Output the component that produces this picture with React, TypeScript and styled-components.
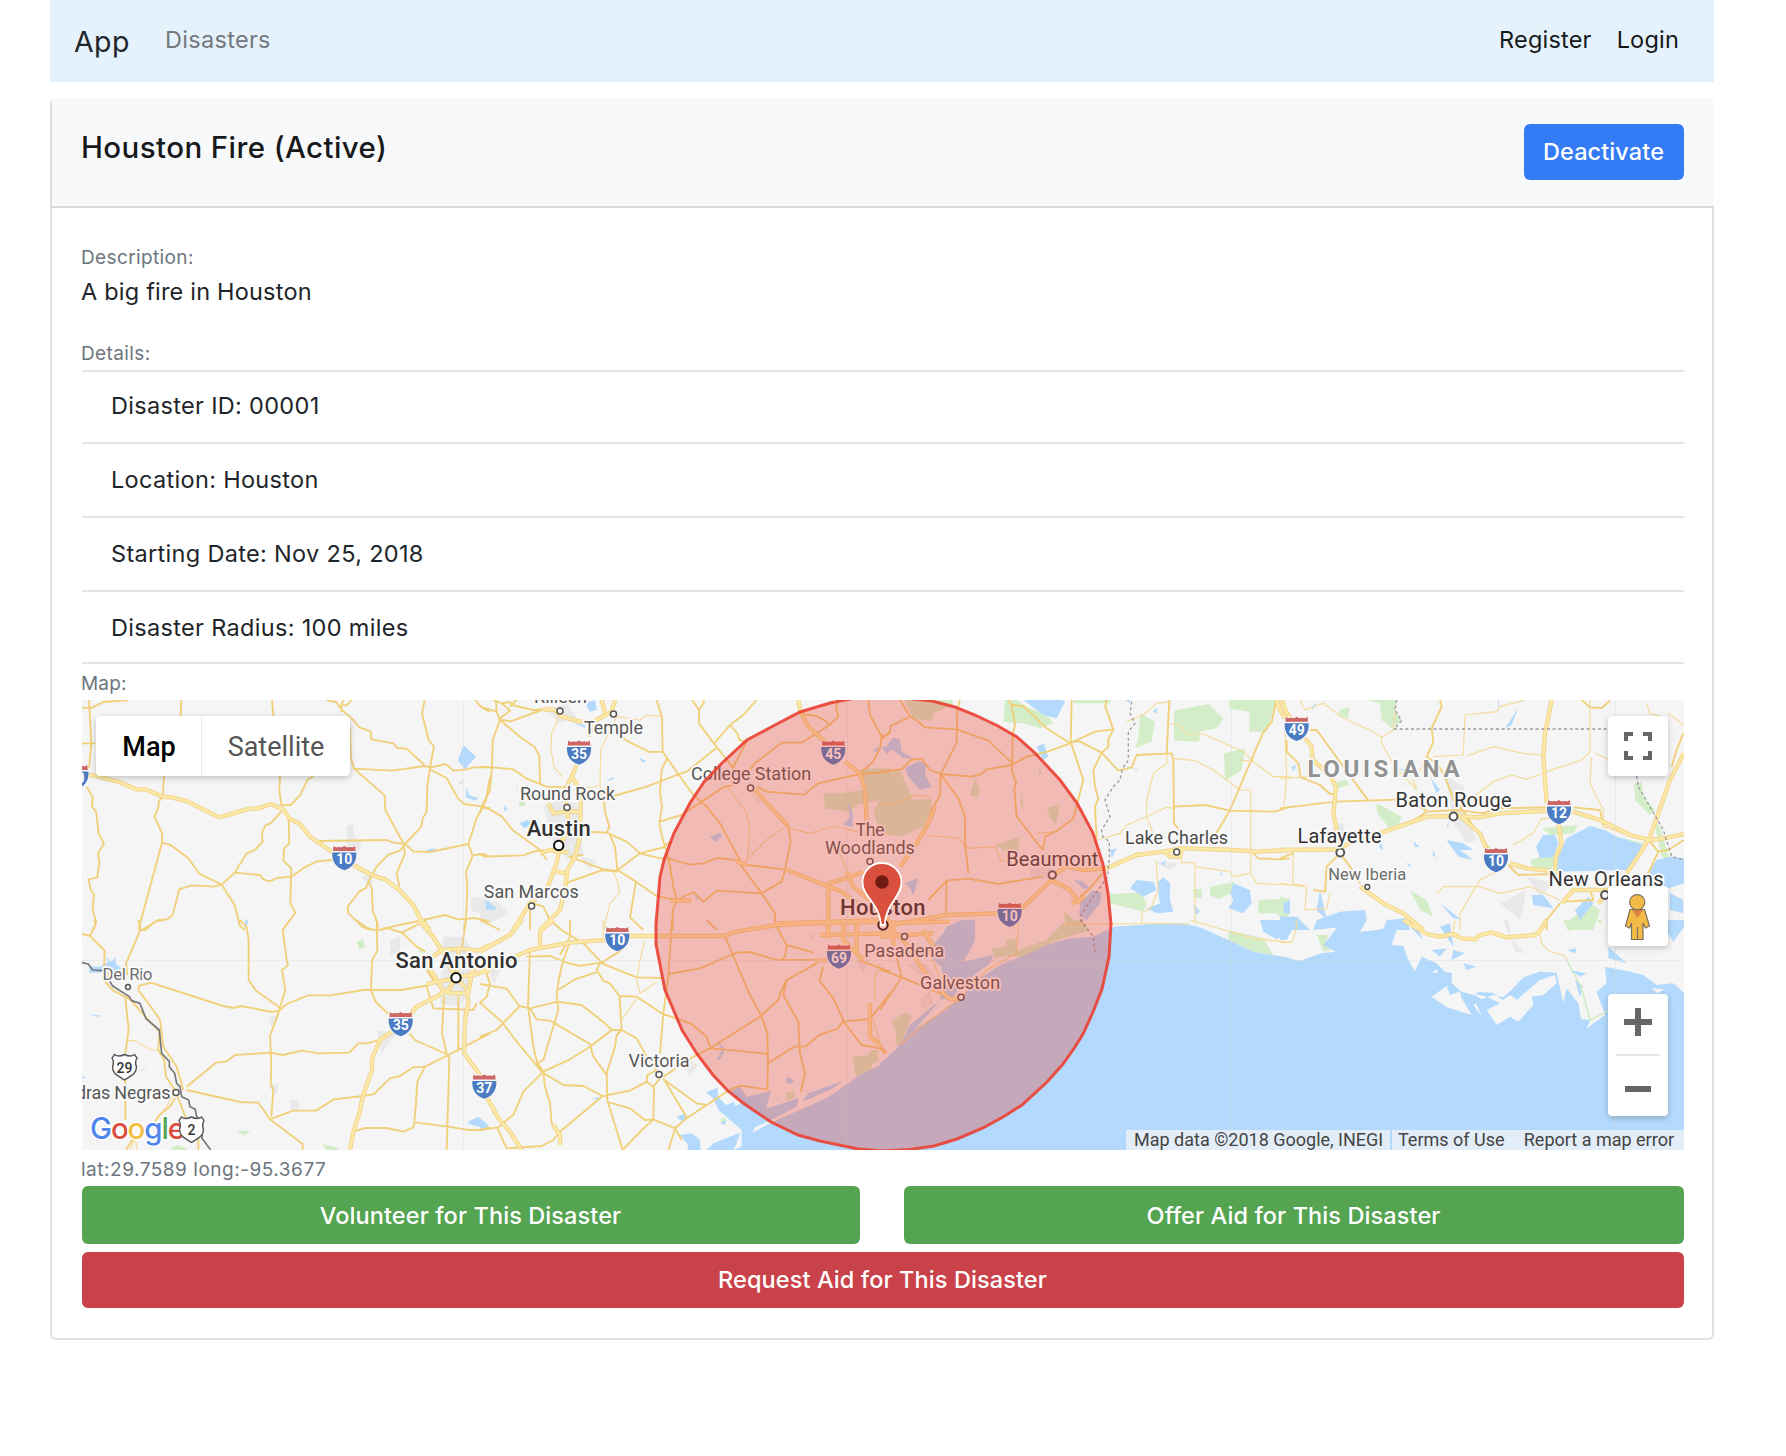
import React from "react";
import styled, { createGlobalStyle } from "styled-components";

const GlobalStyle = createGlobalStyle`
  * { box-sizing: border-box; }
  body {
    margin: 0;
    background: #fff;
    color: #212529;
    font-family: Inter, "Liberation Sans", sans-serif;
    font-size: 23.5px;
  }
`;

const Page = styled.div`
  padding: 0 72px 0 50px;
  min-height: 1456px;
`;

const Navbar = styled.nav`
  display: flex;
  align-items: center;
  height: 82px;
  padding: 0 35px 0 24px;
  background: #e5f2fc;
`;

const Brand = styled.a`
  padding-top: 1px;
  font-size: 28.5px;
  letter-spacing: 0.4px;
  width: 91px;
`;

const NavLink = styled.a<{ $muted?: boolean }>`
  padding-bottom: 3px;
  color: ${(p) => (p.$muted ? "#74797f" : "#15181b")};
  letter-spacing: ${(p) => (p.$muted ? "0.3px" : "0.2px")};
`;

const NavRight = styled.div`
  display: flex;
  gap: 25px;
  margin-left: auto;
`;

const Card = styled.section`
  margin-top: 16px;
  border: 2px solid #dddfe0;
  border-top: 0;
  border-radius: 6px;
`;

const CardHeader = styled.header`
  display: flex;
  justify-content: space-between;
  align-items: flex-start;
  height: 110px;
  margin-right: -2px;
  padding: 26px 30px 26px 29px;
  background: #f8f9fb;
  border-bottom: 2px solid #d9dbdd;
  border-radius: 4px 5px 0 0;
`;

const Title = styled.h1`
  margin: 0;
  font-size: 29.5px;
  font-weight: 500;
  line-height: 47px;
  letter-spacing: 0.4px;
  color: #17191b;
`;

const tones = { primary: "#337cf6", success: "#54a451", danger: "#ca4249" };

const Button = styled.button<{ $tone: keyof typeof tones; $wide?: boolean; $height?: number }>`
  display: flex;
  align-items: center;
  justify-content: center;
  height: ${(p) => p.$height ?? 56}px;
  width: ${(p) => (p.$wide ? "100%" : "160px")};
  padding: 0 1px 2px 0;
  border: 0;
  border-radius: 6px;
  background: ${(p) => tones[p.$tone]};
  color: #fff;
  font: inherit;
  font-weight: 500;
  letter-spacing: 0.1px;
`;

const CardBody = styled.div`
  padding: 35px 28px 30px 30px;
`;

const Label = styled.div<{ $spaced?: boolean }>`
  height: 28px;
  font-size: 19px;
  line-height: 30px;
  margin-top: ${(p) => (p.$spaced ? 29 : 0)}px;
  margin-bottom: 3px;
  text-indent: -1px;
  color: #6c757d;
  letter-spacing: 0.38px;
`;

const MapCaption = styled.div<{ $digits?: boolean }>`
  height: 36px;
  line-height: 40px;
  font-size: 19px;
  text-indent: -1px;
  color: #6c757d;
  letter-spacing: ${(p) => (p.$digits ? 0.52 : 0.2)}px;
`;

const Value = styled.div`
  line-height: 36px;
  text-indent: -1px;
  letter-spacing: 0.2px;
`;

const List = styled.ul`
  list-style: none;
  margin: 0;
  padding: 0;
  border-top: 2px solid #e3e4e4;
`;

const Item = styled.li`
  display: flex;
  align-items: center;
  height: 74px;
  padding: 0 0 2px 29px;
  letter-spacing: 0.32px;
  border-bottom: 2px solid #e3e4e4;
  &:first-child, &:last-child { height: 72px; }
  &:first-child { padding-bottom: 4px; }
  &:last-child { padding-bottom: 0; }
`;

const Actions = styled.div`
  display: grid;
  grid-template-columns: 778px 1fr;
  gap: 8px 44px;
  & > :last-child { grid-column: 1 / -1; }
  & > :not(:last-child) { padding: 1px 1px 0 0; }
`;

const MapFrame = styled.div`
  position: relative;
  height: 450px;
  overflow: hidden;
  background: #f5f5f5;
  font-family: Roboto, "Liberation Sans", sans-serif;
  & > svg { display: block; }
`;

const MapControl = styled.div<{ $top: number; $height?: number }>`
  position: absolute;
  right: 16px;
  top: ${(p) => p.$top}px;
  width: 60px;
  height: ${(p) => p.$height ?? 60}px;
  background: #fff;
  border-radius: 4px;
  box-shadow: 0 2px 6px rgba(0, 0, 0, 0.22);
`;

const MapTypes = styled.div`
  position: absolute;
  left: 14px;
  top: 16px;
  display: flex;
  height: 60px;
  background: #fff;
  border-radius: 4px;
  box-shadow: 0 2px 6px rgba(0, 0, 0, 0.22);
`;

const MapType = styled.div<{ $active?: boolean }>`
  display: flex;
  align-items: center;
  justify-content: center;
  width: ${(p) => (p.$active ? 105 : 149)}px;
  padding: ${(p) => (p.$active ? "2px 0 0 1px" : "2px 0 0 0")};
  font-size: 27px;
  font-weight: ${(p) => (p.$active ? 500 : 400)};
  color: ${(p) => (p.$active ? "#000" : "#565656")};
  border-left: ${(p) => (p.$active ? "0" : "1px solid #e8e8e8")};
`;

const Attribution = styled.div`
  position: absolute;
  right: 0;
  bottom: 0;
  display: flex;
  gap: 2px;
  height: 20px;
  font-size: 18px;
  line-height: 20px;
  color: #444;
`;

const Credit = styled.div<{ $width: number; $inset?: number }>`
  display: flex;
  justify-content: space-between;
  width: ${(p) => p.$width}px;
  padding: 0 10px 0 ${(p) => p.$inset ?? 8}px;
  background: #e2edf7;
  white-space: nowrap;
`;

type Tile = {
  x: number;
  y: number;
  water?: string;
  land?: string;
  green?: string;
  urban?: string;
  thin?: string;
  road?: string;
  motorway?: string;
  border?: string;
  state?: string;
};

const tiles: Tile[] = [
  {
    x: 80, y: 690,
    water: "M1150 165L1188 200 1155 238 1134 212ZM1158 290L1168 316 1195 325 1185 332 1158 322ZM500 685L503 700 498 720 494 705ZM1032 484L1052 476 1072 476 1054 486ZM1218 635H1230V660H1218Z",
    urban: "M802 405H820L824 440 846 465 836 485 800 475ZM845 560L865 554 880 574 870 588ZM1170 622H1230V692L1200 672 1175 662ZM1132 280L1157 262 1147 284Z",
    road: "M6 52L30 56 70 36 145 30M27 30L34 160 28 225 20 250M6 160H46M304 30L302 78M576 30L580 78M740 30L768 36 784 58 820 90 838 112 872 124 874 148 940 160 952 174 980 176 1034 226M784 66V44L790 30M786 46H800L815 30M810 110L812 200 822 236 938 242 1034 228 1052 232 1098 222 1120 242 1160 238 1180 232H1230M1034 30L1026 70 1046 150 1062 170 1050 232 1042 290 1040 365 1028 385 1024 410 975 462M822 236L914 316 916 360 970 460 975 490 950 550 958 590M1050 238L1100 264 1134 325 1152 342 1210 350 1230 355M1185 30L1205 52 1230 66M1230 262L1218 330 1190 385 1165 462 1178 498 1158 545 1162 590 1158 690 1150 720M1178 496L1206 492 1230 500M20 290L38 322 36 350 48 364 56 430 72 460 54 490 58 515 52 562 26 568 32 600 42 612 38 660 48 695 40 720M252 258L248 320 236 335V350L224 380 246 430V458L175 720M246 458L272 465 325 505 357 550 425 584 464 645 480 708 495 720M190 718L235 690 262 688 278 675 298 598 335 586 400 590 425 584 464 548 500 490 525 480 548 455 546 430 556 406 572 400 604 364M464 548L540 555 550 568 568 574 592 564 634 560 674 532 712 514 757 510M600 258L598 300 604 345H632L660 316 682 270 700 258M626 390L628 460 612 475 610 512 634 535 631 640 646 668 608 720M715 453L920 450 940 458 975 462 1000 484 1050 486 1165 462M975 464L960 482 925 494 890 530 862 582 858 594 838 605 804 648V668L846 710 870 720M866 580L876 595 878 660 894 705 890 720M905 720L925 712 1030 690 1095 675 1135 688 1185 684 1230 695",
    motorway: "M20 255L40 256 118 276 168 298H196L248 320 275 322 322 334 418 382 500 358 540 354 572 342 610 358 628 385 660 402 690 440 757 486M820 525L875 555 915 568 958 600 1000 645 1020 685 1050 720",
  },
  {
    x: 80, y: 920,
    water: "M28 140H60L85 125 75 110 95 125 105 112 110 135 125 145 100 155 75 150 60 158H28ZM28 282L68 288 48 290ZM178 455L206 445 186 449ZM1165 605L1195 590 1225 615 1215 625 1165 612ZM495 0H503L499 22ZM6 470H20L6 477Z",
    green: "M830 66L848 58 856 80 838 88ZM470 632H512L492 647ZM270 690L290 675 320 685V690ZM728 672L773 684V690H738ZM1010 95L1025 87 1030 99Z",
    urban: "M1090 50H1150L1170 80V200L1140 260 1080 250ZM565 290L595 285 575 325ZM565 500L595 490 590 525ZM632 540H657V575H632ZM890 330L950 340 905 400ZM930 60L960 50V100L930 105Z",
    thin: "M145 362H165L215 390H235M150 690L165 655 172 690M225 605L260 560 285 510H260",
    road: "M6 42L30 48 74 92 72 150 86 165M30 48L48 10 42 0M175 0L182 28 138 130 142 165M182 30H196L225 5 250 0M480 0L500 22 506 60V180L528 212 598 262M630 0L608 30 620 120 624 136 606 150 616 210 600 262 598 272 570 348 574 430 572 490 580 510 574 590M176 212V198L212 188 430 258 460 264 484 258 575 276 598 272 620 252 684 226H752L850 210H965L1050 195M828 0L862 24 890 32 920 24 966 38 1010 80 1036 95M890 0L892 92 876 122 873 210 886 244 925 282M966 38L1040 0M1158 0L1145 90M72 150L76 186 100 212 150 238 196 290 238 335 235 390 252 418 258 470 285 510 320 600 355 640V690M176 212L205 250 240 300 250 380 290 440 310 510M136 235L146 328 136 400M136 480V600M138 690L160 655M320 510L480 546 535 548 570 598 668 672V690M320 500L408 428 440 424 465 405 572 398 608 405 665 392 716 400 808 398 835 370H860L905 358M570 598L640 572H708L762 538 850 528 882 522 930 475 960 468 1000 442 1035 440 1105 405 1230 340M988 340L1005 360 1105 405 1108 420 1100 690M1035 440L1012 485 1008 550 1003 605M820 635L855 624H920L970 635 1000 622 1003 607 1105 620 1165 630H1200L1230 622M285 535L270 560 238 585 225 605M1040 200L1060 265 1180 270 1190 250M1040 150L1060 180 1100 220M1092 230L1086 340 1100 400M1135 230V395",
    motorway: "M1060 110L1085 90 1140 86 1195 92 1230 75M1040 130L1072 182 1090 215 1125 220H1165L1175 160 1195 130M1015 0L1055 45 1085 90 1125 170M1125 175L1110 205 1070 230 1010 260 990 285M935 335L900 360 876 415V450L848 530 838 580 820 635 810 690M1128 170L1160 210 1165 250 1155 300 1152 400 1200 465M1128 170L1180 165 1230 150M1040 192L1125 175M1135 90L1130 170",
    border: "M6 128L25 132 38 150 68 152 74 160 98 198 148 230 155 242 180 250 198 296 238 330 245 400 268 424V440L284 460 290 490 300 500 305 530 326 540 330 560 346 568 350 590 368 605 366 655 392 690",
  },
  {
    x: 480, y: 690,
    water: "M315 40L345 30 350 60 330 65ZM280 100L315 105 318 115ZM475 200L500 215 488 217ZM375 275L400 260V268ZM75 345L83 360 71 362ZM118 400L143 390 158 400 133 415ZM15 630L50 655 40 660 18 655ZM690 440L720 428 728 438 706 456ZM1100 325L1118 370V410L1090 405 1110 380ZM1180 185L1192 167 1194 182ZM1205 170H1230V185L1220 193ZM642 615L654 620 651 630Z",
    green: "M1030 310H1080L1150 300 1140 240 1160 235H1230V430L1190 400 1180 360 1200 330 1130 345 1110 365 1035 355ZM110 285L115 305 112 310ZM115 335L135 330V345L120 350Z",
    urban: "M200 60L260 40 290 80 240 100ZM190 350L230 330 290 340 310 490 260 510 220 450ZM0 630L60 640 85 670 30 700H0ZM820 320L850 325 835 345ZM300 500L350 510 330 540Z",
    thin: "M232 80L230 100 215 130 213 180 222 230 245 260M370 335L360 290 362 180 385 130 410 80 480 90 500 75 545 80M280 300L355 288M400 545L415 580 418 610 390 640 380 680 372 720M745 295L795 360 808 400 805 490 795 520M800 510L870 440 910 415M930 415L990 430 1060 408 1130 425 1200 435 1230 430M1050 460L1085 500 1100 545",
    road: "M0 50L50 65 60 90 38 150 36 232 30 300 8 345 0 370M40 30L68 42 90 62 56 88M66 40L90 36 100 46 160 60 190 58M110 30L90 50M50 65L48 30M56 88L92 94 185 60M60 90L125 145 163 170 178 198 180 280M0 230L36 232 100 238 138 265 200 290 260 292M0 350L30 358 66 380 98 420 180 480 200 510M0 495L10 492 12 500 130 496 160 485 190 480M310 495L268 500 370 538 410 542 480 490 550 472 570 455M380 428L440 455 480 490 540 505 566 506M530 30L546 80 548 185 508 186 440 152 410 130M548 185L562 205 545 238 540 310 546 350 538 400 546 440 566 505 580 590 590 630 578 660V720M562 205L600 260 640 315 680 350 720 400 782 515M636 30L657 60V100L700 158 760 235 765 220 800 155M657 60L670 40 672 30M702 160L750 105 790 75 830 30M750 105L772 130 778 150 800 155M708 175L620 245 590 255 500 290 400 318 300 335M372 335L375 365 388 410 380 428 330 426M388 430L405 470 412 540 468 575 530 618 580 628M540 395L605 375 730 292 760 285 800 250 825 220 905 158 965 158 1010 130 1048 105 1040 95 1010 78 965 72M468 575L450 682 490 720M412 545L368 540 262 578 240 610M1048 105L1075 80 1068 50 1075 30M1165 30L1170 75 1205 140 1200 175 1180 215 1140 250M1205 140L1230 130M830 290L860 305 972 314 1015 280 1140 252 1230 245M566 506L630 524 670 520 712 504 780 512M800 525L915 538M590 630L640 606 670 635 710 602 840 610M782 525L845 610 885 670V700M925 410L932 455 915 540 905 575 840 612M0 690L60 720M150 650V720M210 690L190 650 160 640",
    motorway: "M405 30L395 65 340 95 325 140M365 30L375 70M290 225L275 260 260 290 258 340M275 260L300 300 302 350 300 440 285 500 262 540 255 600 240 660 180 720M205 340L220 370 258 365H300M258 340L262 365 268 420 240 460 230 520 200 600 150 640 100 720M190 58L225 60 245 80 300 95H340M180 490L210 480 265 488M215 540L255 550M955 30L960 60 985 110 1035 155M1095 215L1140 250 1155 300 1160 400M825 300L925 410M915 538L1010 575 1085 605 1130 640M1045 720V580L1100 565 1150 545M1100 545L1120 590 1180 640 1210 700M770 515L800 525M570 632H635M885 700L1230 690",
  },
  {
    x: 480, y: 920,
    water: "M678 517L712 503 714 530 738 555 762 545 765 558 785 550 748 515 780 500 800 530 873 513 858 566 955 535 950 560 873 600 825 622 817 638 880 605 1000 552 1050 528 1140 465 1200 435 1230 415V690H680L700 670 780 638V680L785 630 715 570 700 535ZM622 690L625 675 600 645 635 640 660 660 662 690ZM968 545L985 520 1088 483 1060 505ZM920 470L942 480 932 492 916 487ZM710 360L735 388 720 420H710L725 390ZM590 590L610 582 620 592 605 604ZM720 610L740 600 735 615ZM325 540L360 530 355 536ZM0 600L25 622 0 627Z",
    land: "M780 640L786 635 784 680 760 690 770 670Z",
    green: "M1118 410L1165 405 1175 390H1195V420L1175 435V455L1128 470ZM918 515H946L941 535 919 540ZM718 600L733 592 741 602 726 610ZM755 690L783 678 773 690Z",
    urban: "M610 430L630 420 655 435 630 470ZM30 160L50 120 70 135 40 195ZM985 50L1005 35V65ZM1130 120H1170L1150 160Z",
    thin: "M370 0V50M495 60L480 120 470 180 480 220 530 185M470 235L425 300M1200 130L1185 170V240M1180 300L1200 370",
    road: "M0 192L80 206 118 258 150 265 232 245 305 255 375 310 395 330 425 330 470 355 500 410 530 450M0 350L50 330 120 258M20 160L30 190 20 230 0 248 65 305 118 375 188 458 250 495 310 498 368 528M150 90L144 258 160 380 172 430M150 265L170 298 210 302 330 372 340 410 380 465M240 105L270 50V0M235 210L285 178 355 155M230 220L238 170 250 120 268 70M210 0L245 30 310 70 365 128 418 95 440 70M140 110L210 108 260 128 300 138 360 128 470 172 545 174M360 128L350 150 370 182 390 190 418 228 425 330 410 345 405 380 380 460 382 540 428 690 486 630M418 228L470 230 545 280 635 312 680 350 690 380M230 220L235 270 190 420 172 430 190 455M395 330L330 380 270 418 190 455 130 515 100 585 80 600 52 625M190 458L195 500 210 550 215 610 235 640M368 528L240 635 220 660 185 678 80 685 50 620M0 630L52 622M368 528L450 512 500 485 520 500 540 475M500 485L502 465 530 450M540 400L550 280 565 170 576 0M380 545L450 565 495 600 520 598 585 625 620 595 680 555 745 512 780 497 862 508 864 430M486 630L520 598M522 500L520 598M550 475L620 592M550 478L650 550 680 555M585 628L565 690M585 625L605 660M550 470L640 410 690 385 840 290 895 240 905 210 920 180 1010 130M690 385L770 392 862 402M565 162L660 145 770 98 810 96 890 120H1010M735 50L810 225 845 290 862 340 864 430 942 380H975L1018 345 1075 325 1090 300 1060 235 1018 182 1030 140M920 180L910 225 955 305 960 400 975 460 962 515M890 20L920 75 915 110 905 120M920 75L1000 98M680 0L710 30M1090 305L1170 297 1230 220M1090 305L1145 375 1200 385 1215 400M1135 120L1230 155",
    motorway: "M220 0L180 35V80M125 0L90 45 0 95M0 155L60 130 150 90 270 68 375 60M448 48H730L770 35 890 15 1000 10 1230 5M20 530L55 595 90 635 125 690M220 615L240 645V675M1020 45L1230 40M1045 0V55M1130 0V100M1170 250V350L1200 375M1090 0V60L1150 120M1005 122H1040",
  },
  {
    x: 880, y: 690,
    water: "M430 30L490 75 530 85 555 35 545 30ZM12 180L40 142 60 150 65 185 100 205 70 205 40 180ZM75 235L120 212 138 225 135 255 155 290 120 300 85 260ZM470 170L492 160 504 200 489 210ZM600 640L640 600 665 610 660 640 620 690 598 675ZM580 568L610 576 630 596H610ZM75 580L115 565 100 615 90 595ZM750 595L770 570 820 575 830 600 790 620ZM830 580L850 562 870 580V630L880 665 830 670 800 655 840 640ZM700 710L870 700 910 720H700ZM845 520L857 510 852 530ZM1020 540L1028 555 1023 560ZM1060 580L1110 600 1115 640 1090 670 1045 655 1060 630 1050 610ZM940 640L960 665 945 675ZM1210 640L1230 630V670H1212ZM818 65L833 50 828 70ZM690 480L710 475 695 505ZM735 30H750V40Z",
    green: "M375 30H410L440 50 500 75 520 100 480 115 430 100 370 95ZM580 30H690V40H580ZM882 62L985 42 1030 85 1010 115 960 125 958 155 882 152ZM1048 30H1190L1160 125H1108V65L1048 55ZM780 70L825 95 815 155 765 175 775 145ZM1032 190L1095 175 1085 240 1035 272ZM690 612L780 608 800 640 790 665 690 640ZM990 590L1065 575 1060 605 1015 628 990 615ZM1135 630L1230 625V665L1215 700 1190 670H1135ZM75 30H218V45L160 70 155 95 100 85ZM0 250L60 240 100 330 155 325V360L130 410 60 440 0 430ZM285 262L300 307 290 322 270 317ZM425 300L431 360 421 340ZM500 355L540 343 528 403 513 388ZM345 465L420 440 410 500 380 485ZM478 230L488 255 476 250ZM550 660L590 700 560 720ZM937 598H965V623H945Z",
    urban: "M820 515L900 520 870 540ZM450 490L510 510V570L450 560ZM740 230L775 235 770 243Z",
    thin: "M860 190V220L820 250 800 330V380L815 420 830 450M882 355L860 352 800 380 740 405 720 430 650 450M868 100L900 105 920 132H970L1090 185 1120 215M880 205L945 212 1000 240 1080 300H1112V550L1130 580 1230 585M1080 210L1120 215 1180 260H1230M868 35L830 40 790 75 740 95M905 490V518H945V700M945 530L1050 545 1060 560 1110 550M828 510L835 600 815 650 785 670V700L930 702M0 340H60L100 315 150 320M135 435L235 445 265 475 345 470 365 515 470 500M400 720L420 640M470 430L530 425",
    road: "M240 30L232 60 230 158 182 252 180 315 150 370M60 30L90 78 108 90 135 112 232 118 325 152 395 218M0 150L30 125 32 108 90 80M0 245L65 238 92 210 125 206 150 240 182 252 275 260 305 252 320 238 395 225 440 200 502 185 570 160 645 125 700 118M385 30L395 45 405 105 398 135 396 245 408 275 403 300 410 380 488 480M395 45L430 48 500 115 570 160M575 30L572 155 610 270 580 385 535 420 495 440 488 480M680 30L676 50 700 118 684 150 686 170 665 188 640 240 645 290 655 325 645 350 650 445M572 155H600L665 188 715 242 755 232 770 195 875 190 880 210 882 400 898 420M868 30L860 190M182 252L235 325 255 380V460L265 550M200 572L265 566 355 582 488 560M200 572L145 630M200 572L198 668M885 350L975 345 1050 362 1185 365 1230 350M1190 30L1175 95 1148 130 1050 360 988 465M1120 490L1135 505 1200 508 1230 505M668 550L625 600 600 620",
    motorway: "M1190 30L1200 60 1215 85M165 350L145 400 110 460 60 530M0 710L60 700 200 675 350 670M425 655L515 570 570 600 600 640M520 555L560 530 610 540 680 535 770 495 850 485 905 475 1060 480 1130 485 1230 480M855 485L870 500H900L905 478M575 640L615 620",
    state: "M755 35L750 70 765 100 745 125V210L728 235 720 270 700 290 675 330 690 380 665 420 668 440 688 455V500L683 560 640 620 600 680 620 715",
  },
  {
    x: 880, y: 920,
    water: "M0 430L45 390 100 330 180 280 240 235 290 180 370 130 430 108 500 75 570 55 640 50 690 25 780 15 900 8 960 22 1045 60 1120 95 1230 114V690H0ZM245 0H285V60L265 100 250 125 340 105 330 130 290 160 240 200 220 230 180 240 130 300 90 340 60 375 90 315 180 240 190 180 185 140 160 120 155 80 190 40 200 20ZM1140 0H1220L1228 35 1190 58 1150 35Z",
    green: "M335 85L375 80 380 58H410L412 90 500 60 550 10 600 0 630 30 520 65 430 110 375 110 345 115ZM35 305L75 275 95 290 60 380 45 370 50 340ZM1045 30L1150 55 1180 105 1120 95 1045 60Z",
    urban: "M80 130H140L180 200 110 160ZM120 240L150 210 160 250 125 270Z",
    thin: "M415 0L410 100 320 150 240 235 130 315 60 375M690 12L830 10M930 0L1120 55 1230 68M150 100L180 180M70 90L160 95M550 12H690",
    road: "M0 148L65 172 190 225M65 172L0 270M45 90L65 172M0 375L20 400",
    motorway: "M0 0L70 60 110 120 150 180 205 235 240 238M0 50L160 40M0 10L210 5M40 0V80M130 30L160 80 130 110",
    state: "M600 0L640 50 645 95",
  },
  {
    x: 1280, y: 690,
    water: "M835 500L860 445 930 408 975 420 1010 440 1090 465 1085 480 1045 540 830 545ZM768 470L790 435H825L835 460 820 500 780 505ZM1100 550L1130 510 1170 500 1212 505V580L1150 600ZM500 450L550 460 580 480H540L580 510 535 500ZM380 515L395 530 385 528ZM460 480L468 505 458 495ZM400 455L420 470H405ZM480 640L545 690 520 685ZM755 615H790L820 655 760 645ZM110 690L180 665 255 660 260 690 150 715 100 720ZM0 680H50L90 720H0ZM320 690L380 685 390 720H310ZM885 660L925 620 940 640 900 690ZM35 230L50 225 40 245ZM450 260L480 300 470 310ZM654 30H657V90ZM715 55L675 115 695 105ZM110 40L95 62 100 45ZM300 450L310 480 298 475ZM500 410L508 390 505 412ZM120 600L140 690 110 660ZM1170 610L1210 630V670L1170 660ZM355 238L400 238 380 246Z",
    green: "M178 60L208 50 206 85 176 75ZM260 30H350L345 60 365 90 335 115 305 90 300 40ZM290 340L365 380 355 405 325 412 290 365ZM1062 280L1085 275 1090 320 1125 360 1110 375 1065 330ZM1120 390L1140 410 1170 510 1145 500ZM750 510L850 480 810 540 760 535ZM785 415L895 405 880 430 810 435ZM170 275L200 270 205 285 175 295ZM0 620L20 625 15 700H0ZM390 600L440 630 460 680 420 660ZM870 690L930 640 960 660 940 720H870ZM170 680L210 670 190 710ZM1010 440L1090 460 1060 470Z",
    urban: "M500 260L555 290 540 340 590 450 560 460 520 400ZM160 400L190 400 200 450 170 460ZM740 560L820 580 780 620ZM660 640L740 600 720 690Z",
    thin: "M60 30L75 60 130 40 190 85 270 120 305 142V160L345 230 410 300 400 270 440 210M460 200L550 195 555 75 650 65 660 50 730 32M305 142L340 120 345 60M560 198L640 170 730 190 785 195M550 345L640 275 695 255 740 268 785 252M930 30V185L905 210 800 245M945 190L1000 215 985 230M935 200L930 280 970 360 968 410 1095 450M15 120L20 260 12 350M40 485L38 580 80 590 75 660 140 655 150 610M0 580L70 590M470 610L490 590H600L660 610 750 590 840 630M650 545L600 570 540 670V720M100 260L0 265M700 465L760 430 785 385 860 388M1100 40L1110 70 1165 85M1210 105L1165 70",
    road: "M20 150V185L55 220 62 262 120 285 150 312H170M90 120H110L265 332M0 355L120 340 170 335 370 328 400 340 440 362M480 30L485 50 455 115 460 155 440 200 470 220 490 250 530 350M388 400L440 365 530 360 610 370 650 355 800 352M880 352L960 360 970 405M540 350L630 480M905 30L930 52 965 54 990 32M1210 130L1190 180 1175 230M180 490L140 530 135 605 100 600M180 490L210 530 240 580M685 525L715 555 830 552M1212 450L1165 480 1135 485 1110 455M1135 485L1100 560M840 640L800 690V720M930 600L940 630 850 635M0 505L40 490",
    motorway: "M5 30L20 70 45 95M75 145L95 170 98 210 150 255 168 290 160 370 178 460M0 480L180 478 205 460 300 430 440 380 520 378 600 382 660 370 800 362M815 30L795 130 790 200 800 340M530 370L600 430 620 480M690 520L740 535 830 545M835 400L845 460 828 500 825 540M878 365L960 390 1050 435 1110 450 1150 445 1212 432M1212 190L1170 270 1110 440 1080 490 1040 550M240 590L310 640 370 670 430 720M845 640L880 600H990L955 640",
    state: "M350 30L345 60 365 92 342 117H985M1070 258L1075 290 1110 350 1150 420 1175 500 1212 510",
  },
  {
    x: 1280, y: 920,
    water: "M0 110L60 122 125 100 168 95 130 75 170 25 130 15V0H260L240 35 290 30 355 15 335 75 370 78 385 120 405 153 425 110 470 130 495 155 515 160V190L545 215 580 225 650 180 735 170 780 155 830 158 850 250 860 205 895 250 903 298 935 300 920 325 975 285 950 215 980 190 975 140 1050 155 1090 165 1130 195 1180 190 1212 220V690H0ZM0 0L30 5 35 30 20 60H0ZM1120 0H1212V20L1180 65 1165 40ZM985 80L1040 130 985 115ZM480 20L520 80 510 10ZM520 90L555 100 515 120ZM860 90L890 85 885 100ZM870 150L920 160 900 170ZM455 90L500 85 480 110ZM400 0L430 60 395 25ZM885 180L910 200 900 230ZM550 130L590 140 560 150Z",
    land: "M455 230L500 198 510 225 540 215 545 235 575 285 500 262ZM535 195L600 190 660 175 700 165 730 172 700 205 670 232 640 225 605 238 585 225ZM560 215L620 230 660 250 620 270 650 315 690 290 715 305 760 255 755 230 790 225 830 190 825 165 780 180 730 222 712 240 690 225 668 240 640 218ZM580 255L588 250 606 290ZM900 200L940 210 960 280 920 328 935 288ZM1115 205L1153 208 1133 220ZM455 155L475 148 470 160ZM1050 80L1120 90 1195 165 1185 180 1130 150Z",
    green: "M175 100L235 72 300 112 285 145 250 147ZM110 45H145L135 75 165 85 130 95ZM850 0H910L865 35ZM950 0H965V15ZM365 0H385L375 15Z",
    urban: "M670 0H685L695 60 735 100 705 95Z",
    thin: "M525 0L518 42M780 45L785 70 810 95 850 105 862 118M0 68L38 65 50 20 48 0",
    motorway: "M370 0L440 42 478 50 520 42 545 55 585 58 600 45 635 38 680 52 765 45 778 35 800 0",
  },
];

type LayerKey = Exclude<keyof Tile, "x" | "y">;

function Layer({ of, ...rest }: { of: LayerKey } & React.SVGProps<SVGGElement>) {
  return (
    <g strokeLinejoin="round" {...rest}>
      {tiles.map((t, i) =>
        t[of] ? <path key={i} d={t[of]} transform={`translate(${t.x} ${t.y}) scale(.33333)`} /> : null
      )}
    </g>
  );
}

type City = {
  name: string;
  x: number;
  y: number;
  w?: number;
  size?: number;
  color?: string;
  weight?: number;
};

const cities: City[] = [
  { name: "Killeen", x: 560.5, y: 702.5, w: 53 },
  { name: "Temple", x: 613.5, y: 734, w: 59 },
  { name: "Round Rock", x: 567.5, y: 799.7, w: 95 },
  { name: "Austin", x: 558.7, y: 835.5, w: 64, size: 22, weight: 500, color: "#303030" },
  { name: "San Marcos", x: 531.3, y: 898, w: 95 },
  { name: "San Antonio", x: 456.5, y: 967.6, w: 122, size: 22, weight: 500, color: "#303030" },
  { name: "Del Rio", x: 127.5, y: 979.7, w: 50, size: 17, color: "#6c6c6c" },
  { name: "Piedras Negras", x: 111, y: 1098.7, w: 119 },
  { name: "College Station", x: 751.1, y: 780.3, w: 120 },
  { name: "The", x: 870, y: 835.5, w: 29 },
  { name: "Woodlands", x: 869.9, y: 853.5, w: 90 },
  { name: "Houston", x: 882.7, y: 915, w: 85.5, size: 22, weight: 500, color: "#303030" },
  { name: "Pasadena", x: 904.3, y: 957.3, w: 80 },
  { name: "Galveston", x: 960.1, y: 989.4, w: 80 },
  { name: "Beaumont", x: 1052.3, y: 866, w: 92, size: 20, color: "#404040" },
  { name: "Lake Charles", x: 1176.5, y: 844, w: 103, color: "#4a4a4a" },
  { name: "Lafayette", x: 1339.5, y: 843, w: 84, size: 20, color: "#333" },
  { name: "New Iberia", x: 1367.2, y: 880.4, w: 78, size: 16.5, color: "#6c6c6c" },
  { name: "Baton Rouge", x: 1453.5, y: 807, w: 116, size: 20, color: "#333" },
  { name: "New Orleans", x: 1606, y: 886.4, w: 115, size: 20, color: "#333" },
  { name: "Victoria", x: 659, y: 1067, w: 61 },
];

const dots: [number, number, number?][] = [
  [560, 711], [613.5, 714], [567, 807.5], [558.7, 845.5, 5], [531.6, 906], [456, 977.7, 5], [128, 987, 2.7],
  [176, 1092.5], [750.6, 788], [870, 861.5], [883, 925, 5], [904.5, 936.5], [961, 997.3], [1052.3, 875, 4],
  [1176.7, 852], [1340.3, 852.5, 4.2], [1367.3, 887, 2.7], [1453.5, 816.5, 4.2], [1605, 895, 4.2], [659, 1074.5],
];

const interstates: [string, number, number][] = [
  ["10", 76.5, 777], ["10", 344.3, 858], ["35", 579, 752.5], ["45", 833.3, 752.5], ["10", 617.3, 939],
  ["69", 839, 956.5], ["10", 1009.7, 914.7], ["49", 1296.7, 728.8], ["12", 1559, 812], ["10", 1496, 860],
  ["35", 400.7, 1024], ["37", 484.3, 1086.5],
];

const Interstate = ({ n, x, y }: { n: string; x: number; y: number }) => (
  <g transform={`translate(${x} ${y})`}>
    <path d="M-11.5 -12L-12.5 -6V0C-12.5 6 -7 10.5 0 13C7 10.5 12.5 6 12.5 0V-6L11.5 -12Z" fill="#f8f8f8" />
    <path d="M-10.8 -12Q-8.5 -9.8 -5.5 -11.2Q-3 -9.8 0 -12Q3 -9.8 5.5 -11.2Q8.5 -9.8 10.8 -12L11.4 -7H-11.4Z" fill="#cd6664" />
    <path d="M-12 -5.6H12C12.5 3 9 9 0 12.3C-9 9 -12.5 3 -12 -5.6Z" fill="#4a7bc3" />
    <text y="6.2" textAnchor="middle" fontSize="14" fontWeight="700" fill="#fff">{n}</text>
  </g>
);

const UsRoute = ({ n, x, y }: { n: string; x: number; y: number }) => (
  <g transform={`translate(${x} ${y})`}>
    <path
      d="M-10 -12.5Q-6 -9.5 0 -12.5Q6 -9.5 10 -12.5L12.5 -9Q10 -5 12 0C12 7 6 9 0 13C-6 9 -12 7 -12 0Q-10 -5 -12.5 -9Z"
      fill="#fff" stroke="#555" strokeWidth="1.4"
    />
    <text y="5.5" textAnchor="middle" fontSize="14" fontWeight="500" fill="#333">{n}</text>
  </g>
);

const radius =
  "883,697 905,698 932,701 955,707 975,715 998,726 1017,737 1035,753 1060,780 1077,803 1093,833 1103,864 1108,893 1111,924 1109,957 1102,989 1093,1012 1083,1034 1075,1047 1063,1064 1047,1082 1022,1105 1003,1117 983,1128 957,1139 934,1146 910,1149.5 883,1151 858,1149 820,1141 798,1135 771,1122 743,1103 728,1091 713,1075 697,1054 682,1030 665,990 656,944 656,924 660,877 664,860 674,833 690,803 704,782 722,763 747,740 775,725 800,712 830,703 855,698";

const MapDrawing = () => (
  <svg width="1602" height="450" viewBox="82 700 1602 450">
    <rect x="82" y="700" width="1602" height="450" fill="#f5f5f5" />
    <Layer of="urban" fill="#e9e9e9" />
    <Layer of="green" fill="#d4edc9" />
    <Layer of="water" fill="#b3dafc" />
    <Layer of="land" fill="#f5f5f5" />
    <path d="M1566 959L1581.5 988 1590 1020 1608 1011" fill="none" stroke="#c9ecb8" strokeWidth="1.3" />
    <Layer of="thin" fill="none" stroke="#f5dc9c" strokeWidth="3.5" />
    <Layer of="road" fill="none" stroke="#f1d07a" strokeWidth="5.6" />
    <Layer of="motorway" fill="none" stroke="#efd083" strokeWidth="13" />
    <Layer of="motorway" fill="none" stroke="#fce8a6" strokeWidth="8.5" />
    <Layer of="border" fill="none" stroke="#777" strokeWidth="5" />
    <Layer of="state" fill="none" stroke="#9b9b9b" strokeWidth="4" strokeDasharray="9 8" />
    <path d="M463.5 700V1150M847.5 700V1150M1231.5 700V1150M1615.5 700V1150M82 960.5H1684" stroke="#dcdcdc" strokeOpacity=".4" />
    {interstates.map(([n, x, y], i) => <Interstate key={i} n={n} x={x} y={y} />)}
    <UsRoute n="29" x={124.5} y={1067} />
    {dots.map(([x, y, r = 3.3], i) => (
      <circle key={i} cx={x} cy={y} r={r - 0.3} fill="#fff" stroke={r > 4.5 ? "#111" : "#555"} strokeWidth={r > 3.5 ? 2 : 1.5} />
    ))}
    {cities.map((c) => (
      <text
        key={c.name} x={c.x} y={c.y} textAnchor="middle" textLength={c.w}
        fontSize={c.size ?? 18} fontWeight={c.weight ?? 400} fill={c.color ?? "#565656"}
        stroke="#fafafa" strokeWidth="3.5" strokeLinejoin="round" paintOrder="stroke"
      >
        {c.name}
      </text>
    ))}
    <text x="1307.5" y="777.4" textLength="152" fontSize="24" fontWeight="700" fill="#929292" stroke="#fafafa" strokeWidth="3" paintOrder="stroke">
      LOUISIANA
    </text>
    <polygon points={radius} fill="#ea4335" fillOpacity=".33" stroke="#ea4335" strokeOpacity=".92" strokeWidth="3" />
    <path d="M881.7 863C892.5 863 901.5 871.5 901.5 882.3C901.5 897 886 903 884.5 925H881C879.5 903 862.5 897 862.5 882.3C862.5 871.5 871 863 881.7 863Z" fill="#d9503f" stroke="#fff" strokeWidth="1.8" />
    <circle cx="882" cy="882" r="6.8" fill="#721b14" />
    <text x="90" y="1139.3" textLength="95" fontSize="29.5" fontFamily="Inter, sans-serif" fontWeight="500" stroke="#fff" strokeWidth="3" paintOrder="stroke">
      <tspan fill="#5086ec">G</tspan><tspan fill="#d94f3e">o</tspan><tspan fill="#f2bd42">o</tspan>
      <tspan fill="#5086ec">g</tspan><tspan fill="#57a55c">l</tspan><tspan fill="#d94f3e">e</tspan>
    </text>
    <UsRoute n="2" x={191.5} y={1129.5} />
  </svg>
);

const FullscreenIcon = () => (
  <svg width="60" height="60" viewBox="0 0 60 60" fill="none" stroke="#666" strokeWidth="4">
    <path d="M18 25V18H25M35 18H42V25M42 35V42H35M25 42H18V35" />
  </svg>
);

const PegmanIcon = () => (
  <svg width="60" height="60" viewBox="0 0 60 60" stroke="#7b705c" strokeWidth="1.2">
    <path d="M22 23.5H36.5L41.5 40 37.5 42 35 37V53.5H23.5V37L21.5 42 17.5 40Z" fill="#f2bb46" />
    <path d="M24 24H35L29.5 32Z" fill="#dd8344" stroke="none" />
    <path d="M29.5 41V53.5" />
    <circle cx="29.2" cy="16.3" r="7.6" fill="#f2bb46" />
  </svg>
);

const ZoomIcons = () => (
  <svg width="60" height="122" viewBox="0 0 60 122" fill="none" stroke="#666" strokeWidth="6">
    <path d="M16 28H44M30 14V42M17 95H43" />
    <path d="M8 61H52" stroke="#e6e6e6" strokeWidth="2" />
  </svg>
);

const details = [
  "Disaster ID: 00001",
  "Location: Houston",
  "Starting Date: Nov 25, 2018",
  "Disaster Radius: 100 miles",
];

export default function App() {
  return (
    <Page>
      <GlobalStyle />
      <Navbar>
        <Brand>App</Brand>
        <NavLink $muted>Disasters</NavLink>
        <NavRight>
          <NavLink>Register</NavLink>
          <NavLink>Login</NavLink>
        </NavRight>
      </Navbar>
      <Card>
        <CardHeader>
          <Title>Houston Fire (Active)</Title>
          <Button $tone="primary">Deactivate</Button>
        </CardHeader>
        <CardBody>
          <Label>Description:</Label>
          <Value>A big fire in Houston</Value>
          <Label $spaced>Details:</Label>
          <List>
            {details.map((d) => <Item key={d}>{d}</Item>)}
          </List>
          <MapCaption>Map:</MapCaption>
          <MapFrame>
            <MapDrawing />
            <MapTypes>
              <MapType $active>Map</MapType>
              <MapType>Satellite</MapType>
            </MapTypes>
            <MapControl $top={16}><FullscreenIcon /></MapControl>
            <MapControl $top={186}><PegmanIcon /></MapControl>
            <MapControl $top={294} $height={122}><ZoomIcons /></MapControl>
            <Attribution>
              <Credit $width={264}><span>Map data ©2018 Google, INEGI</span></Credit>
              <Credit $width={292} $inset={6}><span>Terms of Use</span><span>Report a map error</span></Credit>
            </Attribution>
          </MapFrame>
          <MapCaption $digits>lat:29.7589 long:-95.3677</MapCaption>
          <Actions>
            <Button $tone="success" $wide $height={58}>Volunteer for This Disaster</Button>
            <Button $tone="success" $wide $height={58}>Offer Aid for This Disaster</Button>
            <Button $tone="danger" $wide>Request Aid for This Disaster</Button>
          </Actions>
        </CardBody>
      </Card>
    </Page>
  );
}
